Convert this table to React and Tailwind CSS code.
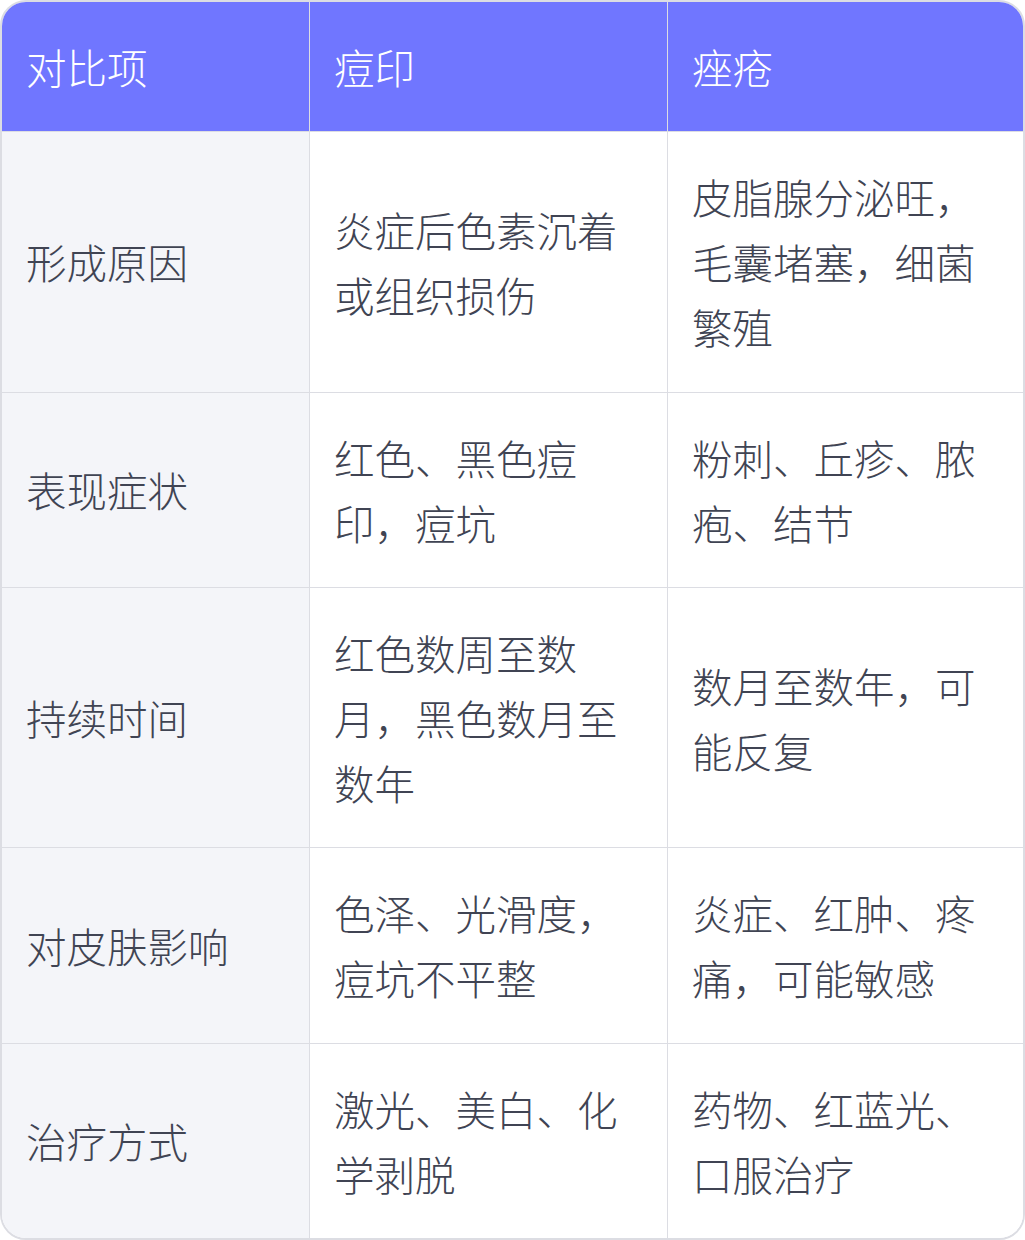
const rows = [
  ['形成原因', '炎症后色素沉着或组织损伤', '皮脂腺分泌旺，毛囊堵塞，细菌繁殖'],
  ['表现症状', '红色、黑色痘印，痘坑', '粉刺、丘疹、脓疱、结节'],
  ['持续时间', '红色数周至数月，黑色数月至数年', '数月至数年，可能反复'],
  ['对皮肤影响', '色泽、光滑度，痘坑不平整', '炎症、红肿、疼痛，可能敏感'],
  ['治疗方式', '激光、美白、化学剥脱', '药物、红蓝光、口服治疗'],
];

const Cell = ({ children, className = '' }) => (
  <div className={`flex items-center px-6 py-8 text-[40.5px] leading-[65px] ${className}`}>
    <span>{children}</span>
  </div>
);

export default function App() {
  return (
    <div
      className="w-[1025px] h-[1240px] bg-white"
      style={{ fontFamily: '"Noto Sans CJK SC", "Noto Sans", sans-serif' }}
    >
      <div className="h-[1240px] border-2 border-[#dcdde3] rounded-[26px] overflow-hidden grid grid-cols-[307px_358px_1fr]">
        <Cell className="bg-[#7076ff] text-white font-light">对比项</Cell>
        <Cell className="bg-[#7076ff] text-white font-light border-l border-[#dcdde3]">痘印</Cell>
        <Cell className="bg-[#7076ff] text-white font-light border-l border-[#dcdde3]">痤疮</Cell>
        {rows.map(([a, b, c]) => (
          <div key={a} className="contents">
            <Cell className="bg-[#f4f5f9] text-[#404453] font-light border-t border-[#dcdde3]">{a}</Cell>
            <Cell className="bg-white text-[#404453] font-light border-t border-l border-[#dcdde3]">{b}</Cell>
            <Cell className="bg-white text-[#404453] font-light border-t border-l border-[#dcdde3]">{c}</Cell>
          </div>
        ))}
      </div>
    </div>
  );
}
